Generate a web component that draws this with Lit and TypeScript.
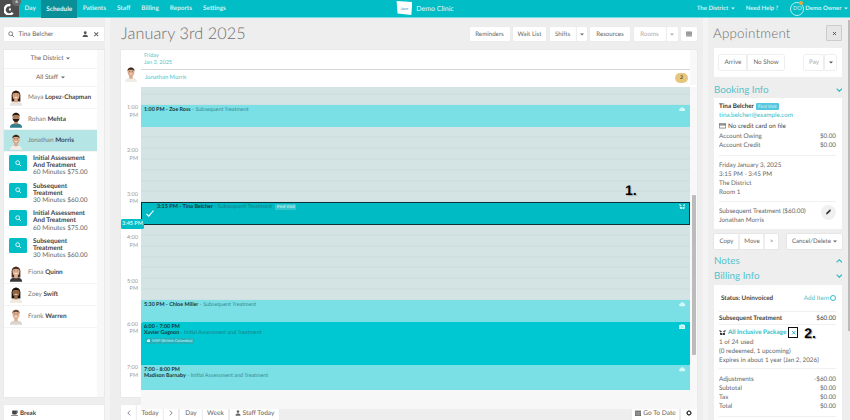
import { LitElement, html, css, svg } from 'lit';
import { customElement } from 'lit/decorators.js';

const HOUR = 43.4;
const FIRST_HOUR = 13;

const caret = html`<svg class="caret" viewBox="0 0 6 4"><path d="M0 .5h6L3 3.6z" fill="currentColor"/></svg>`;
const search = html`<svg viewBox="0 0 12 12" fill="none" stroke="currentColor" stroke-width="1.5"><circle cx="5" cy="5" r="3.6"/><path d="M7.8 7.8 11 11" stroke-linecap="round"/></svg>`;
const person = html`<svg viewBox="0 0 12 12" fill="currentColor"><circle cx="6" cy="3.2" r="2.6"/><path d="M1 11.5c0-3 1.5-4.2 3.4-4.6h3.2c1.9.4 3.4 1.6 3.4 4.6z"/></svg>`;
const cross = html`<svg viewBox="0 0 10 10" fill="none" stroke="currentColor" stroke-width="1.6"><path d="M2 2l6 6M8 2l-6 6"/></svg>`;
const cloud = html`<svg viewBox="0 0 12 8" fill="currentColor"><path d="M3 8a2.5 2.5 0 0 1-.4-5A3.6 3.6 0 0 1 9.4 3 2.5 2.5 0 0 1 9.5 8z"/></svg>`;
const briefcase = html`<svg viewBox="0 0 12 10" fill="currentColor"><path fill-rule="evenodd" d="M4 0h4l1 2h2a1 1 0 0 1 1 1v6a1 1 0 0 1-1 1H1a1 1 0 0 1-1-1V3a1 1 0 0 1 1-1h2zm.7 1L4.3 2h3.4l-.4-1zM4 5v1h4V5z"/></svg>`;
const gift = html`<svg viewBox="0 0 12 10" fill="currentColor"><path d="M1 0l4 2.5L3.5 4 0 2zM11 0 7 2.5 8.5 4 12 2zM1.5 4.5 5.5 6V10l-4-1.5zM10.5 4.5 6.5 6V10l4-1.5z"/></svg>`;
const chevron = (up: boolean) => html`<svg class="chev" viewBox="0 0 10 6" fill="none" stroke="currentColor" stroke-width="1.8"><path d=${up ? 'M1 5l4-4 4 4' : 'M1 1l4 4 4-4'}/></svg>`;
const calendarIcon = html`<svg viewBox="0 0 10 10" fill="currentColor"><path d="M0 1h10v9H0z"/><path d="M0 3.5h10M3.3 3.5V10M6.6 3.5V10M0 6.7h10" stroke="#fff" stroke-width=".5"/></svg>`;
const gridIcon = html`<svg viewBox="0 0 10 8" fill="none" stroke="currentColor" stroke-width="1"><path d="M.5.5h9v7h-9zM3.5.5v7M6.5.5v7"/><path d="M.5 2.5h9" stroke-width="1.4"/><path d="M.5 5.2h9"/></svg>`;
const gear = html`<svg viewBox="0 0 10 10"><circle cx="5" cy="5" r="3" fill="none" stroke="currentColor" stroke-width="1.8"/><path d="M5 0v2M5 8v2M0 5h2M8 5h2M1.5 1.5l1.4 1.4M7.1 7.1l1.4 1.4M1.5 8.5l1.4-1.4M7.1 2.9l1.4-1.4" stroke="currentColor" stroke-width="1.3"/></svg>`;
const coffee = html`<svg viewBox="0 0 12 9" fill="currentColor"><path d="M2 0h8v5a2 2 0 0 1-2 2H4a2 2 0 0 1-2-2z"/><path d="M10 1h1.5v3H10" fill="none" stroke="currentColor"/><path d="M0 8h12v1H0z"/></svg>`;
const pencil = html`<svg viewBox="0 0 10 10" fill="currentColor"><path d="M0 10l.7-3L6.8 1 9 3.2 3 9.3zM7.5.3l.5-.3 2 2-.3.5z"/></svg>`;
const cardIcon = html`<svg viewBox="0 0 12 9" fill="none" stroke="currentColor"><path d="M.5.5h11v8H.5z"/><path d="M.5 3h11" stroke-width="1.6"/></svg>`;

interface Face { skin: string; hair: string; shirt: string; long?: boolean; beard?: boolean; }

const avatar = (f: Face) => html`<svg class="face" viewBox="0 0 16 20">
  ${svg`
    ${f.long ? svg`<path d="M3 8C3 1 13 1 13 8v7H3z" fill=${f.hair}/>` : ''}
    <path d="M1 20c0-4 3-5 7-5s7 1 7 5z" fill=${f.shirt}/>
    <rect x="6" y="11" width="4" height="5" fill=${f.skin}/>
    <ellipse cx="8" cy="8" rx="4" ry="5.2" fill=${f.skin}/>
    <path d="M3.8 7C3.5 1.5 12.5 1.5 12.2 7 11 5 5 5 3.8 7z" fill=${f.hair}/>
    <path d="M6 7.5h1M9 7.5h1" stroke="#333" stroke-width=".7"/>
    ${f.beard
      ? svg`<path d="M4 9c1 5.5 7 5.5 8 0-1 1.5-7 1.5-8 0z" fill=${f.hair}/>`
      : svg`<path d="M6.5 10.5h3" stroke="#fff" stroke-width=".8"/>`}
  `}
</svg>`;

const faces: Record<string, Face> = {
  maya: { skin: '#d9a47f', hair: '#2e1c14', shirt: '#e8e3dc', long: true },
  rohan: { skin: '#b98560', hair: '#221a16', shirt: '#2f7f8c', beard: true },
  jonathan: { skin: '#dba98a', hair: '#3a2a20', shirt: '#f0ece6' },
  fiona: { skin: '#e0b295', hair: '#4a2c20', shirt: '#3a3436', long: true },
  zoey: { skin: '#9a6a48', hair: '#15100d', shirt: '#efe8dc', long: true },
  frank: { skin: '#dfb091', hair: '#6b4c38', shirt: '#d8d4ce' },
};

const services = [
  { name: ['Initial Assessment', 'And Treatment'], info: '60 Minutes $75.00' },
  { name: ['Subsequent', 'Treatment'], info: '30 Minutes $60.00' },
  { name: ['Initial Assessment', 'And Treatment'], info: '60 Minutes $75.00' },
  { name: ['Subsequent', 'Treatment'], info: '30 Minutes $60.00' },
];

const events = [
  { start: 13, end: 13.5, kind: 'light', time: '1:00 PM', who: 'Zoe Ross', what: 'Subsequent Treatment', icon: cloud },
  { start: 17.5, end: 18, kind: 'light', time: '5:30 PM', who: 'Chloe Miller', what: 'Subsequent Treatment', icon: cloud },
  { start: 18, end: 19, kind: 'full', time: '6:00 - 7:00 PM', who: 'Xavier Gagnon', what: 'Initial Assessment and Treatment', icon: briefcase, msp: true, stacked: true },
  { start: 19, end: 20, kind: 'light', time: '7:00 - 8:00 PM', who: 'Madison Barnaby', what: 'Initial Assessment and Treatment', icon: cloud, stacked: true },
];

@customElement('app-root')
export class AppRoot extends LitElement {
  static styles = css`
    :host {
      display: block;
      width: 850px;
      height: 420px;
      overflow: hidden;
      position: relative;
      background: #eeeeee;
      font-family: Lato, 'Liberation Sans', sans-serif;
      font-size: 6.6px;
      color: #666;
      text-rendering: geometricPrecision;
    }
    svg { display: block; }
    b { font-weight: 700; color: #3c3c3c; }
    .caret { width: 4px; height: 3px; flex: none; }

    /* top bar */
    .nav {
      height: 18px;
      background: #00bdc6;
      border-bottom: 1px solid #6fdde2;
      box-sizing: border-box;
      display: grid;
      grid-template-columns: 1fr auto 1fr;
      align-items: stretch;
      color: #d2f2f3;
      font-weight: 700;
      font-size: 6.4px;
    }
    .nav-left, .nav-right, .nav-mid { display: flex; align-items: center; }
    .nav-left { align-items: stretch; }
    .home { width: 19px; background: #4d4d4d; position: relative; }
    .home svg { width: 11px; height: 11px; margin: 4px 0 0 4px; }
    .home span {
      position: absolute; right: -2px; top: -3px; width: 9px; height: 9px; border-radius: 50%;
      background: #6a6a6a; color: #ddd; font-size: 4.5px; text-align: center; line-height: 10px;
    }
    .nav-left a { display: flex; align-items: center; padding: 0 5.5px; }
    .nav-left a.on { background: #088f98; color: #e4f7f8; margin: 0 0 -1px 0; padding: 0 5px; }
    .nav-mid { gap: 4px; font-size: 7px; font-weight: 400; color: #e4f8f9; }
    .flag {
      width: 16px; height: 14px; background: #fff; margin-top: -1px;
      clip-path: polygon(2% 0, 100% 8%, 94% 100%, 8% 90%);
      color: #39c; font-size: 4px; display: flex; align-items: center; justify-content: center; font-style: italic;
    }
    .nav-right { justify-content: flex-end; padding-right: 2px; font-size: 6px; }
    .nav-right .drop { display: flex; align-items: center; gap: 2.5px; }
    .help { margin: 0 12px 0 11px; }
    .owner {
      width: 14px; height: 14px; border: 1px solid #bdeff1; border-radius: 50%; box-sizing: border-box;
      margin-right: 1px; font-size: 5.5px; font-weight: 400; text-align: center; line-height: 12px; position: relative;
    }
    .owner::after {
      content: ''; position: absolute; right: 0; top: -2px; width: 4px; height: 4px; border-radius: 50%; background: #e8a93c;
    }

    /* page columns */
    .page { display: flex; height: 402px; }
    .left { width: 110px; box-sizing: border-box; padding: 9px 6px 0 4px; background: linear-gradient(90deg, #eee 105px, #f4f4f4 105px); flex: none; }
    .main { width: 593px; box-sizing: border-box; padding: 9px 6px 0 11px; flex: none; }
    .right { flex: 1; box-sizing: border-box; padding: 6px 8px 0 11px; background: linear-gradient(90deg, #f4f4f4 5px, #eee 5px); position: relative; }
    .right-thumb { position: absolute; right: 0; top: 2px; width: 2px; height: 311px; background: #bbb; }

    /* staff sidebar */
    .searchbox {
      height: 14px; background: #fff; display: flex; align-items: center; padding: 0 5px 0 4px; gap: 4px;
      box-shadow: 0 0 1px #ddd; font-size: 6.4px; color: #666;
    }
    .searchbox svg { width: 6.5px; height: 6.5px; flex: none; }
    .searchbox span { flex: 1; }
    .staff { margin-top: 9px; height: 347px; background: #f8f8f8; padding-right: 7px; box-shadow: 0 0 1px #ccc; }
    .staff-in { background: #fff; height: 100%; }
    .pick {
      height: 18.5px; display: flex; align-items: center; justify-content: center; gap: 3px;
      border-bottom: 1px solid #f3f3f3; box-sizing: border-box; font-size: 6.4px; color: #666;
    }
    .who {
      height: 21.7px; display: flex; align-items: center; padding-left: 5px; gap: 5px; box-sizing: border-box;
      border-bottom: 1px solid #f4f4f4; font-size: 6.4px; color: #777; white-space: nowrap;
    }
    .who.on { background: #b6e5e6; }
    .face { width: 14px; height: 18px; flex: none; }
    .who b { color: #444; }
    .svc { height: 27.6px; display: flex; padding: 3px 0 0 5px; gap: 6px; box-sizing: border-box; font-size: 6.5px; line-height: 7.2px; color: #666; white-space: nowrap; }
    .svc-ico { width: 18px; height: 15.5px; background: #00bdc6; border-radius: 1.5px; color: #fff; display: flex; align-items: center; justify-content: center; flex: none; }
    .svc-ico svg { width: 6.5px; height: 6.5px; }
    .svc b { display: block; color: #444; }
    .break {
      margin-top: 8px; height: 16px; background: #fff; display: flex; align-items: center; gap: 2px; padding-left: 7px;
      box-shadow: 0 0 1px #ddd; color: #444; font-weight: 700; font-size: 6.2px;
    }
    .break svg { width: 7px; height: 6px; }

    /* toolbars */
    .bar { display: flex; align-items: center; height: 14px; gap: 3.5px; }
    .bar h1 { margin: 0 auto 0 0; font-weight: 300; font-size: 16.2px; color: #6f6f6f; letter-spacing: .1px; line-height: 14px; white-space: nowrap; }
    .btn {
      height: 14px; background: #fff; display: flex; align-items: center; justify-content: center; gap: 2px;
      box-shadow: 0 0 1px #ddd; border-radius: 1px; color: #666; font-size: 6.2px; box-sizing: border-box; flex: none; white-space: nowrap;
    }
    .btn svg:not(.caret) { width: 6px; height: 6px; flex: none; }
    .btn.off { color: #aaa; }
    .join { display: flex; flex: none; }
    .join .btn + .btn { border-left: 1px solid #eee; }
    .foot { margin-top: 8px; height: 16px; gap: 2px; }
    .foot .btn { height: 16px; font-size: 6.6px; }
    .spring { flex: 1; }

    /* calendar */
    .cal { margin-top: 9px; height: 347px; background: #fff; box-shadow: 0 0 1px #ccc; position: relative; }
    .cal-head { height: 35px; display: grid; grid-template-columns: 20px 1fr 7px; }
    .cal-face { display: flex; align-items: flex-end; justify-content: center; padding-bottom: 3px; }
    .cal-face .face { width: 14px; height: 17px; }
    .cal-day { color: #55c2c9; font-size: 5.5px; line-height: 7.5px; }
    .cal-date { height: 20px; border-bottom: 1px solid #d6d6d6; padding: 2.5px 0 0 3px; box-sizing: border-box; }
    .cal-prov { height: 15px; display: flex; align-items: center; justify-content: space-between; padding: 0 2px 0 4px; box-sizing: border-box; color: #55c2c9; font-size: 5.8px; }
    .count { width: 13px; height: 10px; border-radius: 5px; background: #e6c77f; color: #5a4a20; font-size: 5.3px; font-weight: 700; text-align: center; line-height: 10px; }
    .side { background: #f8f8f8; }
    .cal-body { margin-top: 2px; height: 310px; display: grid; grid-template-columns: 20px 549px 7px; position: relative; }
    .hours { padding-top: 18px; color: #999; font-size: 5.5px; text-align: right; padding-right: 3px; box-sizing: border-box; }
    .hour { height: 43.4px; line-height: 7.5px; }
    .track-wrap { height: 100%; background: #f7f7f7; }
    .track {
      height: 303px; position: relative; overflow: hidden; background-color: #d4e3e3;
      background-image: repeating-linear-gradient(180deg, transparent 0, transparent 9.85px, #c8dcdc 9.85px, #c8dcdc 10.85px);
      background-position: 0 -3.5px;
    }
    .ev { position: absolute; left: 0; right: 0; box-sizing: border-box; padding: 2px 3px; font-size: 5.4px; line-height: 6px; color: #3a8a92; white-space: nowrap; }
    .ev.light { background: #7ae0e6; border-radius: 0 1px 1px 0; }
    .ev.full { background: #00c8d2; border-radius: 2px 0 0 0; color: #1f8189; }
    .ev.sel { background: #00bac4; border: 1.3px solid #10333a; padding: 1.5px 0 0 15px; color: #1d7c85; font-size: 5.5px; }
    .ev b { color: #17393f; }
    .ev-ico { position: absolute; right: 5px; top: 2px; width: 6.5px; height: 5px; color: #d4f7f8; }
    .ev.full .ev-ico { height: 5.5px; color: #d8f8f9; }
    .check { position: absolute; left: 3.5px; top: 7.5px; width: 8px; height: 7px; color: #fff; }
    .tag { background: #35c5ce; color: #e8fbfb; font-size: 4.3px; padding: 0 1.5px; margin-left: 2px; border-radius: 1px; display: inline-block; line-height: 5.5px; }
    .msp {
      display: inline-flex; align-items: center; gap: 2px; background: #22b0bb; color: #d8f8f9;
      font-size: 4px; line-height: 5.5px; padding: 0 1.5px; border-radius: 1px; margin: 2px 0 0 1px;
    }
    .msp svg { width: 3.5px; height: 3px; }
    .thumb { position: absolute; right: 1px; top: 108px; width: 4px; height: 160px; background: #bcbcbc; border-radius: 1px; }
    .now {
      position: absolute; left: 0; top: 132px; width: 23px; height: 10px; background: #00bdc6; color: #d8f8f9; border-radius: 1.5px;
      font-size: 5.5px; font-weight: 700; text-align: center; line-height: 10px;
    }
    .mark { position: absolute; font-weight: 700; font-size: 14px; line-height: 14px; color: #000; text-shadow: 1px 1px 1px #aaa; font-family: 'Liberation Sans', sans-serif; }
    .mark.one { left: 504px; top: 96px; }

    /* appointment column */
    .right .title { display: flex; justify-content: space-between; align-items: center; height: 18px; margin-bottom: 6px; }
    .right h2 { margin: 0 0 0 -1px; font-weight: 300; font-size: 13.4px; color: #6f6f6f; letter-spacing: .2px; }
    .close { width: 16px; height: 16px; background: #e6e6e6; border: 1px solid #ccc; box-sizing: border-box; border-radius: 1px; display: flex; align-items: center; justify-content: center; color: #444; }
    .close svg { width: 5px; height: 5px; }
    .card { background: #fff; padding: 0 6px 0 5px; }
    .actions { height: 29px; display: flex; align-items: center; justify-content: space-between; }
    .actions .btn, .tools .btn { box-shadow: 0 0 0 .5px #ddd; }
    .actions .btn { height: 15px; font-size: 6.3px; }
    .sec { display: flex; align-items: center; justify-content: space-between; color: #55c3ca; font-size: 9.8px; height: 15px; }
    .chev { width: 6.5px; height: 4px; color: #2bb9c3; }
    .line { display: flex; justify-content: space-between; align-items: center; height: 9px; color: #666; font-size: 6.3px; white-space: nowrap; }
    .rule { border-top: 1px solid #f0f0f0; }
    .pname { color: #333; font-weight: 700; gap: 2px; justify-content: flex-start; }
    .tag2 { background: #55c7e0; color: #eafafc; font-size: 4.5px; padding: 0 2px; border-radius: 1px; line-height: 7px; font-weight: 400; }
    .teal { color: #35bcc5; }
    .nocard { justify-content: flex-start; gap: 2px; color: #444; }
    .nocard svg { width: 7px; height: 5.5px; }
    .edit { position: absolute; right: 0; top: 3px; width: 15px; height: 15px; border-radius: 50%; background: #f0f0f0; display: flex; align-items: center; justify-content: center; color: #333; }
    .edit svg { width: 5.5px; height: 5.5px; }
    .tools { display: flex; justify-content: space-between; margin-top: 5px; }
    .notes { margin-top: 4.5px; }
    .pkg { justify-content: flex-start; gap: 2px; color: #35bcc5; font-weight: 700; }
    .pkg svg { width: 7px; height: 5.5px; color: #333; }
    .xbox { width: 10px; height: 10.5px; border: 1.2px solid #111; box-sizing: border-box; display: flex; align-items: center; justify-content: center; }
    .pkg .xbox svg { width: 5.5px; height: 5.5px; color: #18a5b0; }
    .mark.two { position: static; margin-left: 4px; }
    .add { display: flex; align-items: center; gap: 1px; color: #55c3ca; }
    .add i { width: 4px; height: 4px; border: 1.2px solid #35bcc5; border-radius: 50%; display: block; }
    .pay { width: 29px; height: 6px; background: #ddd; margin: 5px 0 0 auto; }
  `;

  render() {
    return html`
      ${this.renderNav()}
      <div class="page">
        ${this.renderLeft()}
        ${this.renderMain()}
        ${this.renderRight()}
      </div>
    `;
  }

  renderNav() {
    return html`<div class="nav">
      <div class="nav-left">
        <div class="home">
          <svg viewBox="0 0 12 12" fill="none" stroke="#fff" stroke-width="2.6"><path d="M9.5 9.5A5 5 0 1 1 7 1.5"/><circle cx="6.5" cy="6" r=".5" fill="#fff" stroke-width="1.5"/></svg>
          <span>6</span>
        </div>
        <a>Day</a><a class="on">Schedule</a><a>Patients</a><a>Staff</a><a>Billing</a><a>Reports</a><a>Settings</a>
      </div>
      <div class="nav-mid"><div class="flag">Jane</div><span>Demo Clinic</span></div>
      <div class="nav-right">
        <span class="drop">The District ${caret}</span>
        <span class="help">Need Help ?</span>
        <div class="owner">DO</div>
        <span class="drop">Demo Owner ${caret}</span>
      </div>
    </div>`;
  }

  renderWho(first: string, last: string, face: Face, on = false) {
    return html`<div class="who ${on ? 'on' : ''}">${avatar(face)}<span>${first} <b>${last}</b></span></div>`;
  }

  renderLeft() {
    return html`<div class="left">
      <div class="searchbox">${search}<span>Tina Belcher</span><div style="color:#555">${person}</div>${cross}</div>
      <div class="staff"><div class="staff-in">
        <div class="pick">The District ${caret}</div>
        <div class="pick">All Staff ${caret}</div>
        ${this.renderWho('Maya', 'Lopez-Chapman', faces.maya)}
        ${this.renderWho('Rohan', 'Mehta', faces.rohan)}
        ${this.renderWho('Jonathan', 'Morris', faces.jonathan, true)}
        ${services.map(s => html`<div class="svc">
          <div class="svc-ico">${search}</div>
          <div><b>${s.name[0]}</b><b>${s.name[1]}</b>${s.info}</div>
        </div>`)}
        ${this.renderWho('Fiona', 'Quinn', faces.fiona)}
        ${this.renderWho('Zoey', 'Swift', faces.zoey)}
        ${this.renderWho('Frank', 'Warren', faces.frank)}
      </div></div>
      <div class="break">${coffee} Break</div>
    </div>`;
  }

  renderEvent(e: (typeof events)[number]) {
    const top = 18 + (e.start - FIRST_HOUR) * HOUR;
    const height = (e.end - e.start) * HOUR;
    return html`<div class="ev ${e.kind}" style="top:${top}px;height:${height}px">
      ${e.stacked
        ? html`<b>${e.time}</b><br /><b>${e.who}</b> - ${e.what}`
        : html`<b>${e.time} - ${e.who}</b> - ${e.what}`}
      ${e.msp ? html`<br /><span class="msp">${briefcase} MSP (British Columbia)</span>` : ''}
      <div class="ev-ico">${e.icon}</div>
    </div>`;
  }

  renderMain() {
    const hours = [1, 2, 3, 4, 5, 6, 7];
    return html`<div class="main">
      <div class="bar">
        <h1>January 3rd 2025</h1>
        <div class="btn" style="width:40px">Reminders</div>
        <div class="btn" style="width:33px">Wait List</div>
        <div class="join">
          <div class="btn" style="width:26px">Shifts</div>
          <div class="btn" style="width:11px">${caret}</div>
        </div>
        <div class="btn" style="width:40px">Resources</div>
        <div class="join">
          <div class="btn off" style="width:32px">Rooms</div>
          <div class="btn off" style="width:12px">${caret}</div>
        </div>
        <div class="btn" style="width:16px">${gridIcon}</div>
      </div>

      <div class="cal">
        <div class="cal-head">
          <div class="cal-face">${avatar(faces.jonathan)}</div>
          <div>
            <div class="cal-date cal-day">Friday<br />Jan 3, 2025</div>
            <div class="cal-prov"><span>Jonathan Morris</span><span class="count">2</span></div>
          </div>
          <div class="side"></div>
        </div>
        <div class="cal-body">
          <div class="hours">
            ${hours.map(h => html`<div class="hour">${h}:00<br />PM</div>`)}
          </div>
          <div class="track-wrap">
            <div class="track">
              ${events.map(e => this.renderEvent(e))}
              <div class="ev sel" style="top:${18 + 2.25 * HOUR - 1}px;height:23px">
                <svg class="check" viewBox="0 0 8 7" fill="none" stroke="currentColor" stroke-width="1.1"><path d="M.5 4l2.3 2.2L7.5.5"/></svg>
                <b>3:15 PM - Tina Belcher</b> - Subsequent Treatment <span class="tag">First Visit</span>
                <div class="ev-ico" style="right:4px;top:1px">${gift}</div>
              </div>
            </div>
          </div>
          <div class="side"></div>
          <div class="thumb"></div>
          <div class="now">3:45 PM</div>
          <div class="mark one">1.</div>
        </div>
      </div>

      <div class="bar foot">
        <div class="join">
          <div class="btn" style="width:15px"><svg viewBox="0 0 6 10" fill="none" stroke="currentColor" stroke-width="1.3"><path d="M5 1 1 5l4 4"/></svg></div>
          <div class="btn" style="width:27px">Today</div>
          <div class="btn" style="width:15px"><svg viewBox="0 0 6 10" fill="none" stroke="currentColor" stroke-width="1.3"><path d="M1 1l4 4-4 4"/></svg></div>
        </div>
        <div class="join">
          <div class="btn" style="width:22px">Day</div>
          <div class="btn" style="width:26px">Week</div>
        </div>
        <div class="btn" style="width:49px">${person} Staff Today</div>
        <div class="spring"></div>
        <div class="btn" style="width:47px">${calendarIcon} Go To Date</div>
        <div class="btn" style="width:16px;color:#333">${gear}</div>
      </div>
    </div>`;
  }

  renderRight() {
    return html`<div class="right">
      <div class="right-thumb"></div>
      <div class="title"><h2>Appointment</h2><div class="close">${cross}</div></div>
      <div class="card actions">
        <div class="join">
          <div class="btn" style="width:28px">Arrive</div>
          <div class="btn" style="width:37px">No Show</div>
        </div>
        <div class="join">
          <div class="btn off" style="width:20px">Pay</div>
          <div class="btn off" style="width:12px;color:#555">${caret}</div>
        </div>
      </div>
      <div class="sec" style="margin-top:5px">Booking Info ${chevron(false)}</div>
      <div class="card" style="margin-top:1px">
        <div style="padding:4px 0 5px">
          <div class="line pname">Tina Belcher <span class="tag2">First Visit</span></div>
          <div class="line teal">tina.belcher@example.com</div>
          <div class="line nocard" style="height:12px">${cardIcon} No credit card on file</div>
          <div class="line">Account Owing<span>$0.00</span></div>
          <div class="line">Account Credit<span>$0.00</span></div>
        </div>
        <div class="rule" style="padding:4.5px 0 4px">
          <div class="line">Friday January 3, 2025</div>
          <div class="line">3:15 PM - 3:45 PM</div>
          <div class="line">The District</div>
          <div class="line">Room 1</div>
        </div>
        <div class="rule" style="padding:5px 0 4px;position:relative">
          <div class="line">Subsequent Treatment ($60.00)</div>
          <div class="line">Jonathan Morris</div>
          <div class="edit">${pencil}</div>
        </div>
      </div>
      <div class="tools">
        <div class="join">
          <div class="btn" style="width:25px;height:15px">Copy</div>
          <div class="btn" style="width:25px;height:15px">Move</div>
          <div class="btn" style="width:14px;height:15px">&gt;</div>
        </div>
        <div class="btn" style="width:55px;height:15px">Cancel/Delete ${caret}</div>
      </div>
      <div class="sec notes">Notes ${chevron(true)}</div>
      <div class="sec">Billing Info ${chevron(false)}</div>
      <div class="card" style="margin-top:2px">
        <div class="line" style="height:26px;padding-left:2px;color:#444;font-weight:700">Status: Uninvoiced <span class="add" style="font-weight:400">Add Item <i></i></span></div>
        <div class="rule line" style="height:12px;color:#444"><b style="color:#444">Subsequent Treatment</b><span>$60.00</span></div>
        <div class="rule" style="padding:2px 0 3px">
          <div class="line pkg" style="height:11px">${gift} All Inclusive Package <span class="xbox">${cross}</span><span class="mark two">2.</span></div>
          <div class="line">1 of 24 used</div>
          <div class="line">(0 redeemed, 1 upcoming)</div>
          <div class="line">Expires in about 1 year (Jan 2, 2026)</div>
        </div>
        <div class="rule" style="padding:6px 0 5px">
          <div class="line">Adjustments<span>-$60.00</span></div>
          <div class="line">Subtotal<span>$0.00</span></div>
          <div class="line">Tax<span>$0.00</span></div>
          <div class="line">Total<span>$0.00</span></div>
        </div>
        <div class="rule"><div class="pay"></div></div>
      </div>
    </div>`;
  }
}
